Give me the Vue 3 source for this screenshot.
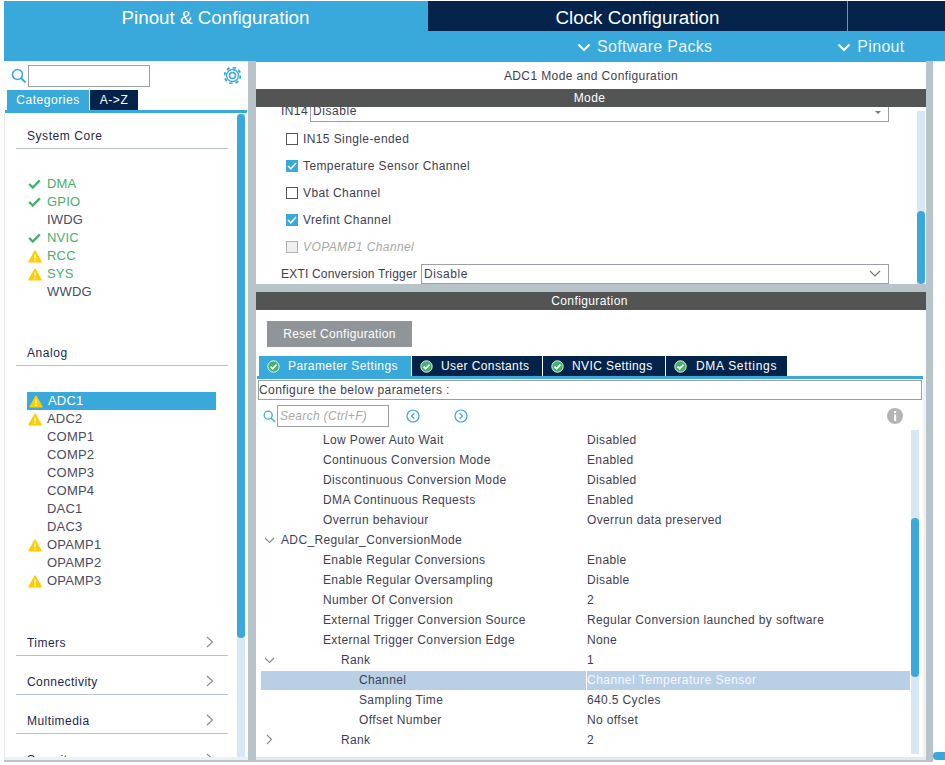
<script setup>
const core = [
  { n: 'DMA', s: 'ok' }, { n: 'GPIO', s: 'ok' }, { n: 'IWDG', s: '' }, { n: 'NVIC', s: 'ok' },
  { n: 'RCC', s: 'warn' }, { n: 'SYS', s: 'warn' }, { n: 'WWDG', s: '' }
]
const analog = [
  { n: 'ADC1', s: 'warn', sel: true }, { n: 'ADC2', s: 'warn' }, { n: 'COMP1', s: '' }, { n: 'COMP2', s: '' },
  { n: 'COMP3', s: '' }, { n: 'COMP4', s: '' }, { n: 'DAC1', s: '' }, { n: 'DAC3', s: '' },
  { n: 'OPAMP1', s: 'warn' }, { n: 'OPAMP2', s: '' }, { n: 'OPAMP3', s: 'warn' }
]
const collapsed = ['Timers', 'Connectivity', 'Multimedia', 'Security']
const checks = [
  { t: 'IN15 Single-ended', c: false }, { t: 'Temperature Sensor Channel', c: true }, { t: 'Vbat Channel', c: false },
  { t: 'Vrefint Channel', c: true }, { t: 'VOPAMP1 Channel', c: false, d: true }
]
const tabs = [
  { t: 'Parameter Settings', a: true, w: 152 }, { t: 'User Constants', w: 130 },
  { t: 'NVIC Settings', w: 122 }, { t: 'DMA Settings', w: 121 }
]
const rows = [
  { l: 1, t: 'Low Power Auto Wait', v: 'Disabled' }, { l: 1, t: 'Continuous Conversion Mode', v: 'Enabled' },
  { l: 1, t: 'Discontinuous Conversion Mode', v: 'Disabled' }, { l: 1, t: 'DMA Continuous Requests', v: 'Enabled' },
  { l: 1, t: 'Overrun behaviour', v: 'Overrun data preserved' },
  { l: 0, t: 'ADC_Regular_ConversionMode', v: '', e: 'down' },
  { l: 1, t: 'Enable Regular Conversions', v: 'Enable' }, { l: 1, t: 'Enable Regular Oversampling', v: 'Disable' },
  { l: 1, t: 'Number Of Conversion', v: '2' }, { l: 1, t: 'External Trigger Conversion Source', v: 'Regular Conversion launched by software' },
  { l: 1, t: 'External Trigger Conversion Edge', v: 'None' },
  { l: 2, t: 'Rank', v: '1', e: 'down' },
  { l: 3, t: 'Channel', v: 'Channel Temperature Sensor', sel: true }, { l: 3, t: 'Sampling Time', v: '640.5 Cycles' },
  { l: 3, t: 'Offset Number', v: 'No offset' }, { l: 2, t: 'Rank', v: '2', e: 'right' }
]
</script>

<template>
  <div class="screen">
    <header class="header">
      <div class="top">
        <div class="tab-main active">Pinout &amp; Configuration</div>
        <div class="tab-main clock">Clock Configuration</div>
        <div class="tab-main rest"></div>
      </div>
      <div class="sub">
        <div class="sub-item packs">
          <svg width="14" height="9" viewBox="0 0 14 9"><path d="M1.500 1.500 7 7l5.500-5.500" fill="none" stroke="#fff" stroke-width="2"/></svg>
          <span>Software Packs</span>
        </div>
        <div class="sub-item pinout">
          <svg width="14" height="9" viewBox="0 0 14 9"><path d="M1.500 1.500 7 7l5.500-5.500" fill="none" stroke="#fff" stroke-width="2"/></svg>
          <span>Pinout</span>
        </div>
      </div>
    </header>

    <div class="body">
      <aside class="left">
        <div class="search-row">
          <svg class="mag" width="16" height="16" viewBox="0 0 16 16"><circle cx="6.500" cy="6.500" r="5" fill="none" stroke="#39a9dc" stroke-width="1.600"/><path d="m10 10 4.500 4.500" stroke="#39a9dc" stroke-width="1.800"/></svg>
          <div class="search-box"></div>
          <svg class="gear" width="17" height="17" viewBox="0 0 17 17">
            <circle cx="8.500" cy="8.500" r="6" fill="none" stroke="#39a9dc" stroke-width="1.300"/>
            <circle cx="8.500" cy="8.500" r="8" fill="none" stroke="#39a9dc" stroke-width="2" stroke-dasharray="3.100 3.180"/>
            <circle cx="8.500" cy="8.500" r="3" fill="none" stroke="#39a9dc" stroke-width="1.500"/>
          </svg>
        </div>
        <div class="left-tabs">
          <div class="ltab on">Categories</div>
          <div class="ltab">A-&gt;Z</div>
        </div>
        <div class="strip"></div>
        <div class="cats">
          <div class="cat-head first">System Core</div>
          <ul class="items core">
            <li v-for="i in core" :key="i.n" class="item" :class="i.s">
              <span class="ico">
                <svg v-if="i.s === 'ok'" width="13" height="10" viewBox="0 0 13 10"><path d="M1.200 5 4.700 8.500 11.800 1.300" fill="none" stroke="#45b06c" stroke-width="2.400"/></svg>
                <svg v-if="i.s === 'warn'" width="14" height="13" viewBox="0 0 14 13"><path d="M7 1.200 13 11.800H1z" fill="#ffcc00" stroke="#ffcc00" stroke-width="1.400" stroke-linejoin="round"/><path d="M7 4.500v4M7 9.500v1.500" stroke="#fff" stroke-width="1.300"/></svg>
              </span>
              <span>{{ i.n }}</span>
            </li>
          </ul>
          <div class="cat-head analog">Analog</div>
          <ul class="items an">
            <li v-for="i in analog" :key="i.n" class="item" :class="[i.s, { sel: i.sel }]">
              <span class="ico">
                <svg v-if="i.s === 'warn'" width="14" height="13" viewBox="0 0 14 13"><path d="M7 1.200 13 11.800H1z" fill="#ffcc00" stroke="#ffcc00" stroke-width="1.400" stroke-linejoin="round"/><path d="M7 4.500v4M7 9.500v1.500" stroke="#fff" stroke-width="1.300"/></svg>
              </span>
              <span>{{ i.n }}</span>
            </li>
          </ul>
          <div class="collapsed">
            <div v-for="c in collapsed" :key="c" class="col-head">
              <span>{{ c }}</span>
              <svg width="8" height="12" viewBox="0 0 8 12"><path d="M1 1l5.500 5L1 11" fill="none" stroke="#8a8f94" stroke-width="1.200"/></svg>
            </div>
          </div>
          <div class="track lt"><div class="thumb"></div></div>
        </div>
      </aside>
      <div class="divider"></div>

      <main class="right">
        <div class="mode-title">ADC1 Mode and Configuration</div>
        <div class="bar">Mode</div>
        <div class="mode">
          <div class="in14">
            <span class="in14-l">IN14</span>
            <div class="select s14"><span>Disable</span><svg width="6" height="3" viewBox="0 0 6 3"><path d="M0 0h6L3 3z" fill="#777"/></svg></div>
          </div>
          <label v-for="c in checks" :key="c.t" class="check" :class="{ dis: c.d }">
            <span class="box" :class="{ on: c.c }">
              <svg v-if="c.c" width="10" height="8" viewBox="0 0 10 8"><path d="M1 4l2.800 2.800L9 1" fill="none" stroke="#fff" stroke-width="1.500"/></svg>
            </span>
            <span>{{ c.t }}</span>
          </label>
          <div class="exti">
            <span>EXTI Conversion Trigger</span>
            <div class="select"><span>Disable</span><svg width="12" height="7" viewBox="0 0 12 7"><path d="M1 1l5 5 5-5" fill="none" stroke="#777" stroke-width="1.200"/></svg></div>
          </div>
          <div class="track md"><div class="thumb"></div></div>
        </div>
        <div class="gap"></div>
        <div class="bar">Configuration</div>
        <div class="config">
          <div class="reset">Reset Configuration</div>
          <div class="ctabs">
            <div v-for="t in tabs" :key="t.t" class="ctab" :class="{ on: t.a }" :style="{ width: t.w + 'px' }">
              <svg width="13" height="13" viewBox="0 0 13 13"><circle cx="6.500" cy="6.500" r="5.700" fill="#45b06c" stroke="#e4f4ea" stroke-width="1"/><path d="M3.500 6.600 5.700 8.700 9.500 4.600" fill="none" stroke="#fff" stroke-width="1.700"/></svg>
              <span>{{ t.t }}</span>
            </div>
          </div>
          <div class="cstrip"></div>
          <div class="cfgbox">Configure the below parameters :</div>
          <div class="tools">
            <svg class="tmag" width="13" height="13" viewBox="0 0 13 13"><circle cx="5.200" cy="5.200" r="4" fill="none" stroke="#39a9dc" stroke-width="1.300"/><path d="m8 8 4 4" stroke="#39a9dc" stroke-width="1.500"/></svg>
            <div class="tsearch">Search (Ctrl+F)</div>
            <svg class="nav prev" width="14" height="14" viewBox="0 0 14 14"><circle cx="7" cy="7" r="6" fill="none" stroke="#39a9dc" stroke-width="1.200"/><path d="M8.300 4.300 5.500 7l2.800 2.700" fill="none" stroke="#39a9dc" stroke-width="1.200"/></svg>
            <svg class="nav next" width="14" height="14" viewBox="0 0 14 14"><circle cx="7" cy="7" r="6" fill="none" stroke="#39a9dc" stroke-width="1.200"/><path d="M5.700 4.300 8.500 7l-2.800 2.700" fill="none" stroke="#39a9dc" stroke-width="1.200"/></svg>
            <svg class="info" width="16" height="16" viewBox="0 0 16 16"><circle cx="8" cy="8" r="8" fill="#b5b5b5"/><rect x="7" y="3" width="2.200" height="2.200" fill="#fff"/><rect x="7" y="6.500" width="2.200" height="6.500" fill="#fff"/></svg>
          </div>
          <div class="tree">
            <div v-for="(r, idx) in rows" :key="idx" class="row" :class="{ sel: r.sel }">
              <div class="name" :class="'l' + r.l">
                <svg v-if="r.e === 'down'" class="exp" width="11" height="7" viewBox="0 0 11 7"><path d="M1 1l4.500 4.500L10 1" fill="none" stroke="#8a8f94" stroke-width="1.200"/></svg>
                <svg v-if="r.e === 'right'" class="exp r" width="7" height="11" viewBox="0 0 7 11"><path d="M1 1l4.500 4.500L1 10" fill="none" stroke="#8a8f94" stroke-width="1.200"/></svg>
                {{ r.t }}
              </div>
              <div class="val" :class="{ wh: r.sel }">{{ r.v }}</div>
            </div>
          </div>
          <div class="track ct"><div class="thumb"></div></div>
          <div class="cside"></div>
          <div class="cfoot"></div>
        </div>
      </main>

      <div class="outer-gray"></div>
      <div class="far"><div class="far-thumb"></div></div>
    </div>
    <div class="bottom"></div>
  </div>
</template>

<style scoped>
.screen { width: 945px; height: 765px; background: #fff; overflow: hidden; font: 12px "Liberation Sans", Arial, sans-serif; letter-spacing: .42px; color: #3e3e52; padding-top: 1px; box-sizing: border-box; }
.header { margin-left: 4px; height: 60px; background: #39a9dc; color: #fff; }
.top { display: flex; height: 30px; }
.tab-main { font-size: 18.800px; letter-spacing: 0; line-height: 33px; text-align: center; background: #03234b; }
.active { width: 423px; background: #39a9dc; }
.clock { width: 419px; margin-left: 1px; }
.rest { flex: 1; margin-left: 1px; }
.sub { display: flex; height: 30px; padding-top: 2px; box-sizing: border-box; }
.sub-item { display: flex; align-items: center; gap: 6px; font-size: 16px; letter-spacing: .3px; color: #e8f5fc; }
.packs { margin-left: 573px; }
.pinout { margin-left: 125px; }
.body { display: flex; height: 699px; margin-left: 4px; }
.left { width: 244px; position: relative; flex: none; }
.search-row { display: flex; align-items: center; height: 29px; }
.mag { margin: 1px 0 0 7px; }
.search-box { width: 120px; height: 20px; border: 1px solid #9aa0a6; margin-left: 1px; }
.gear { margin: 0 0 0 74px; }
.left-tabs { display: flex; margin-left: 3px; gap: 1px; height: 20px; }
.ltab { width: 48px; background: #03234b; color: #fff; line-height: 20px; text-align: center; letter-spacing: .55px; }
.ltab.on { width: 82px; background: #39a9dc; }
.strip { height: 3px; background: #39a9dc; margin: 0 1px; }
.cats { position: relative; height: 644px; overflow: hidden; border-left: 1px solid #e8e8e8; border-bottom: 3px solid #f0f0f0; }
.cat-head { margin: 0 20px 0 11px; padding-left: 11px; height: 24px; line-height: 24px; border-bottom: 1px solid #b9c4ca; color: #22284e; letter-spacing: .55px; }
.first { margin-top: 11px; }
.analog { margin-top: 40px; }
.items { list-style: none; margin: 0; padding: 0; }
.core { margin-top: 26px; }
.an { margin-top: 26px; }
.item { height: 18px; line-height: 18px; display: flex; align-items: center; margin: 0 21px 0 22px; width: 189px; font-size: 13px; letter-spacing: .2px; color: #4b4b5e; }
.item .ico { width: 20px; padding-left: 1px; box-sizing: border-box; display: flex; }
.item.ok { color: #45b06c; }
.item.warn { color: #45b06c; }
.an .item.warn { color: #4b4b5e; }
.item.sel { background: #39a9dc; color: #fff !important; }
.item.sel .ico { width: 21px; padding-left: 2px; }
.collapsed { margin-top: 38px; }
.col-head { margin: 0 20px 1px 11px; height: 38px; box-sizing: border-box; border-bottom: 1px solid #b9c4ca; display: flex; justify-content: space-between; align-items: flex-end; padding: 0 14px 5px 11px; color: #22284e; letter-spacing: .45px; }
.col-head svg { margin-bottom: 2px; }
.collapsed .col-head:first-child { height: 28px; }
.track { position: absolute; width: 8px; background: #d7e7f5; }
.thumb { background: #39a9dc; border-radius: 4px; }
.lt { left: 232px; top: 1px; bottom: 0; }
.lt .thumb { height: 524px; }
.divider { width: 8px; background: #b9c4ca; flex: none; }
.right { width: 670px; flex: none; display: flex; flex-direction: column; border-top: 1px solid #39a9dc; box-sizing: border-box; }
.mode-title { height: 27px; line-height: 28px; text-align: center; letter-spacing: .4px; }
.bar { height: 18px; line-height: 19px; background: #535554; color: #fff; text-align: center; letter-spacing: .4px; flex: none; padding-right: 3px; }
.mode { height: 177px; position: relative; overflow: hidden; flex: none; }
.in14 { display: flex; margin: -4px 0 0 25px; height: 19px; align-items: center; gap: 2px; }
.in14-l { margin-top: -3px; }
.select { flex: 1; height: 20px; border: 1px solid #9aa0a6; box-sizing: border-box; display: flex; align-items: center; justify-content: space-between; padding: 0 7px 0 2px; margin-right: 37px; letter-spacing: .55px; }
.s14 { height: 19px; padding: 0 7px 0 2px; }
.s14 span { margin-top: -3px; }
.check { display: flex; align-items: center; gap: 5px; height: 27px; margin-left: 30px; letter-spacing: .4px; }
.in14 + .check { margin-top: 3px; }
.box { width: 12px; height: 12px; border: 1px solid #555; box-sizing: border-box; display: flex; align-items: center; justify-content: center; }
.box.on { background: #39a9dc; border-color: #39a9dc; }
.dis { color: #a8a8a8; font-style: italic; }
.dis .box { border-color: #b0b0b0; background: #f0f0f0; }
.exti { display: flex; align-items: center; gap: 4px; margin: 0 0 0 25px; height: 27px; letter-spacing: .2px; }
.md { left: 661px; top: 4px; bottom: 0; }
.md .thumb { height: 73px; margin-top: 100px; }
.gap { height: 8px; background: #b9c4ca; flex: none; }
.config { flex: 1; position: relative; }
.reset { width: 145px; height: 26px; line-height: 27px; text-align: center; background: #8f9599; color: #fff; margin: 11px 0 0 11px; letter-spacing: .35px; }
.ctabs { display: flex; margin: 9px 0 0 3px; height: 20px; gap: 1px; }
.ctab { flex: none; display: flex; align-items: center; gap: 8px; padding-left: 8px; box-sizing: border-box; background: #03234b; color: #fff; letter-spacing: .4px; }
.ctab:last-child { letter-spacing: .7px; gap: 9px; }
.ctab.on { background: #39a9dc; }
.cstrip { height: 3px; background: #39a9dc; margin: 0 3px 0 1px; }
.cfgbox { height: 20px; line-height: 19px; border: 1px solid #9aa0a6; box-sizing: border-box; margin: 1px 4px 0 2px; letter-spacing: .42px; }
.tools { position: relative; height: 26px; margin-top: 3px; display: flex; align-items: center; }
.tmag { margin-left: 7px; }
.tsearch { width: 112px; height: 22px; line-height: 21px; border: 1px solid #9aa0a6; box-sizing: border-box; margin-left: 1px; padding-left: 2px; color: #a8a8a8; font-style: italic; letter-spacing: .32px; }
.nav { margin-left: 17px; }
.next { margin-left: 34px; }
.info { position: absolute; left: 631px; top: 5px; }
.tree { margin: 2px 0 0 5px; width: 649px; letter-spacing: .37px; }
.row { height: 20px; line-height: 19px; display: flex; }
.row.sel { height: 19px; background: #b9cfe6; margin-bottom: 1px; }
.name { width: 325px; position: relative; flex: none; white-space: nowrap; box-sizing: border-box; }
.l0 { padding-left: 20px; }
.l1 { padding-left: 62px; }
.l2 { padding-left: 80px; }
.l3 { padding-left: 98px; }
.exp { position: absolute; left: 3px; top: 6px; }
.exp.r { left: 5px; top: 3px; }
.val { padding-left: 1px; flex: 1; }
.val.wh { color: #f4f8fb; border-left: 1px solid #fff; padding-left: 0; letter-spacing: .5px; }
.ct { left: 655px; top: 120px; bottom: 6px; }
.ct .thumb { height: 159px; margin-top: 88px; }
.cside { position: absolute; right: 0; top: 70px; bottom: 0; width: 3px; background: #f2f2f2; }
.cfoot { position: absolute; left: 0; right: 0; bottom: 0; height: 3px; background: #e8e8e8; }
.outer-gray { width: 7px; background: #b9c4ca; flex: none; }
.far { flex: 1; position: relative; }
.far-thumb { position: absolute; left: 0; right: 0; bottom: 0; height: 8px; background: #39a9dc; border-radius: 4px 0 0 4px; }
.bottom { height: 2px; margin-left: 4px; margin-right: 12px; background: #b9c4ca; }
</style>
